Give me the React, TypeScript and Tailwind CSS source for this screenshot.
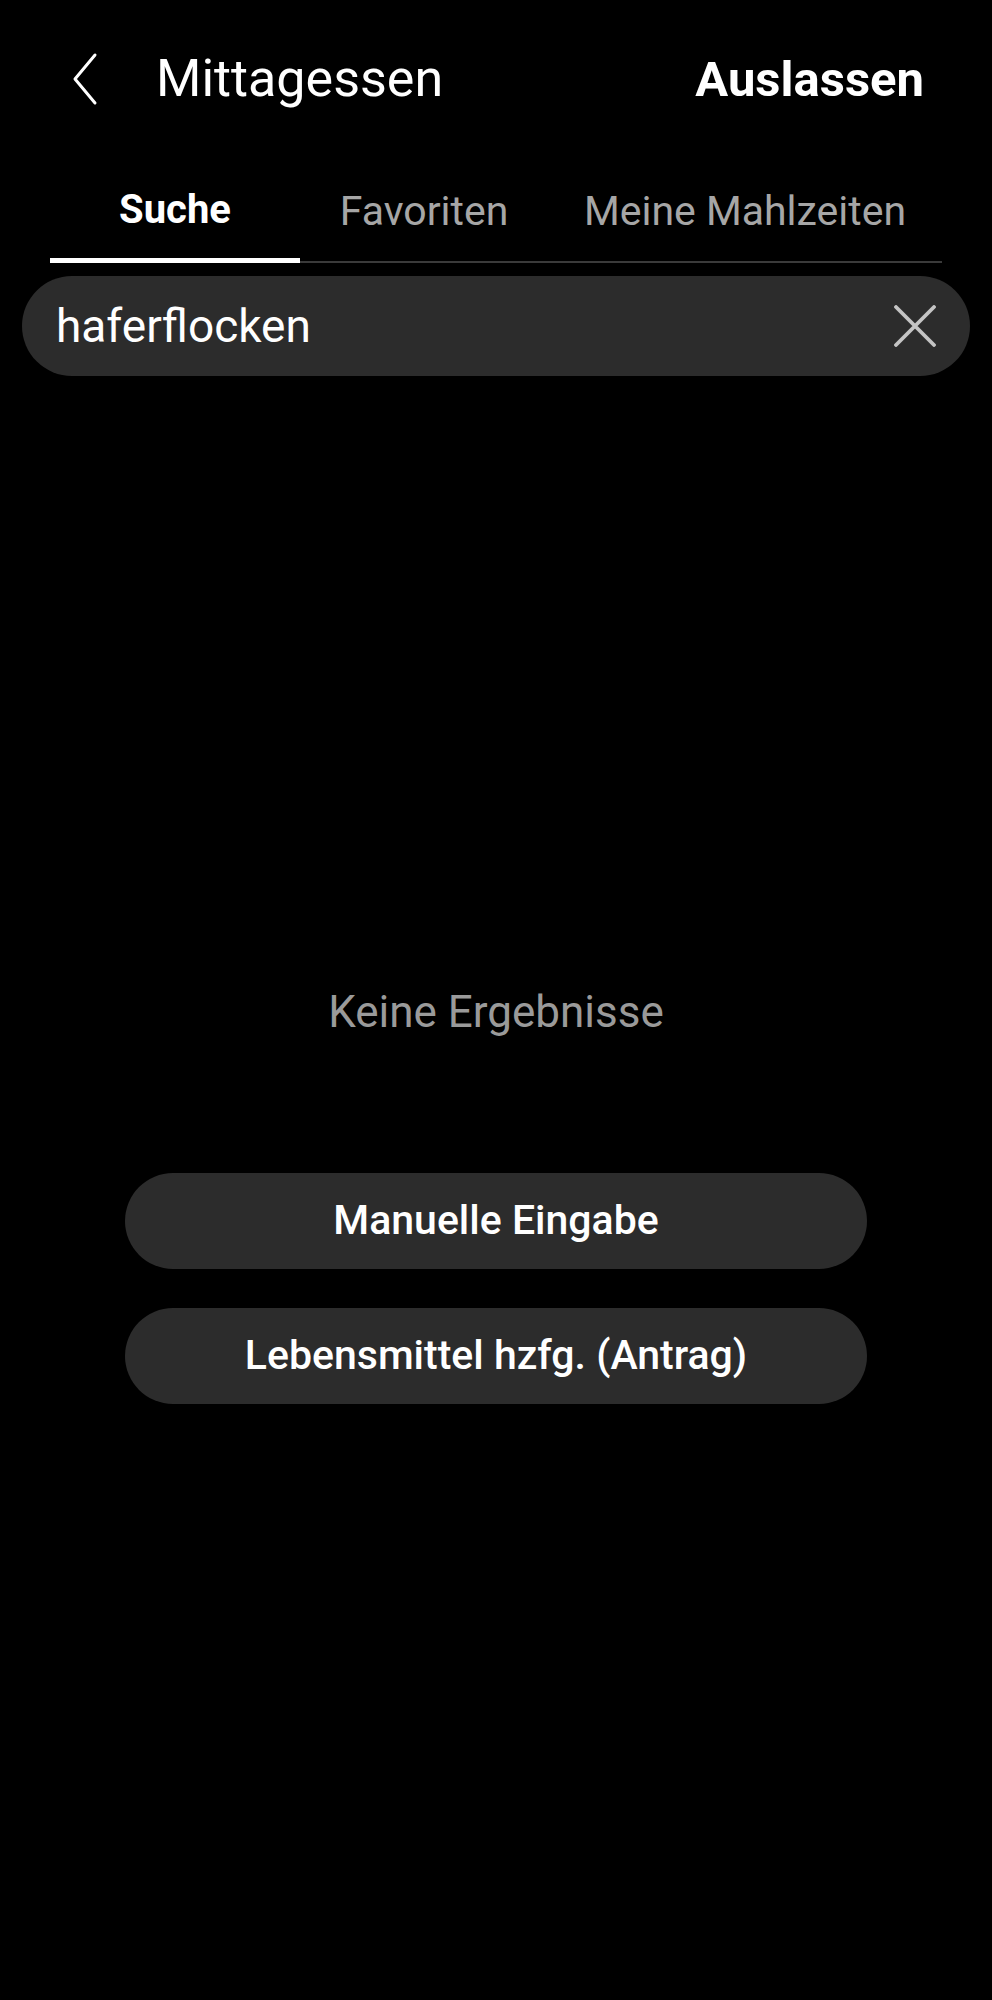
const font = { fontFamily: 'Roboto, "Noto Sans", sans-serif' }

export default function App() {
    return (
        <div className="min-h-[2000px] w-[992px] bg-black text-white" style={font}>
            <div className="flex items-center h-[158px] pl-[66px] pr-[68px]">
                <svg className="w-[38px] h-[54px]" viewBox="0 0 38 54" fill="none" stroke="white" strokeWidth={3} strokeLinecap="round" strokeLinejoin="round">
                    <path d="M29 3 L9 27 L29 51" />
                </svg>
                <span className="ml-[52px] text-[52px] leading-none">Mittagessen</span>
                <span className="ml-auto text-[49px] font-bold leading-none">Auslassen</span>
            </div>

            <div className="mx-[50px] flex border-b-2 border-[#3a3a3a] h-[105px]">
                <div className="w-[250px] flex items-center justify-center text-[40px] font-bold border-b-[5px] border-white -mb-[2px] pt-[4px]">Suche</div>
                <div className="w-[248px] flex items-center justify-center text-[41px] text-[#a6a6a6] pt-[4px]">Favoriten</div>
                <div className="w-[394px] flex items-center justify-center text-[41px] text-[#a6a6a6] pt-[4px]">Meine Mahlzeiten</div>
            </div>

            <div className="mx-[22px] mt-[13px] h-[100px] rounded-full bg-[#2c2c2c] flex items-center pl-[34px] pr-[34px]">
                <span className="text-[46px] leading-none">haferflocken</span>
                <svg className="ml-auto w-[42px] h-[42px]" viewBox="0 0 42 42" fill="none" stroke="#c4c4c4" strokeWidth={3.8} strokeLinecap="round">
                    <path d="M2 2 L40 40 M40 2 L2 40" />
                </svg>
            </div>

            <div className="mt-[614px] text-center text-[44px] text-[#9a9a9a] leading-none">Keine Ergebnisse</div>

            <div className="mt-[139px] flex flex-col items-center gap-[39px]">
                <button className="w-[742px] h-[96px] rounded-full bg-[#2c2c2c] text-[41px] font-medium">Manuelle Eingabe</button>
                <button className="w-[742px] h-[96px] rounded-full bg-[#2c2c2c] text-[41px] font-medium">Lebensmittel hzfg. (Antrag)</button>
            </div>
        </div>
    )
}
